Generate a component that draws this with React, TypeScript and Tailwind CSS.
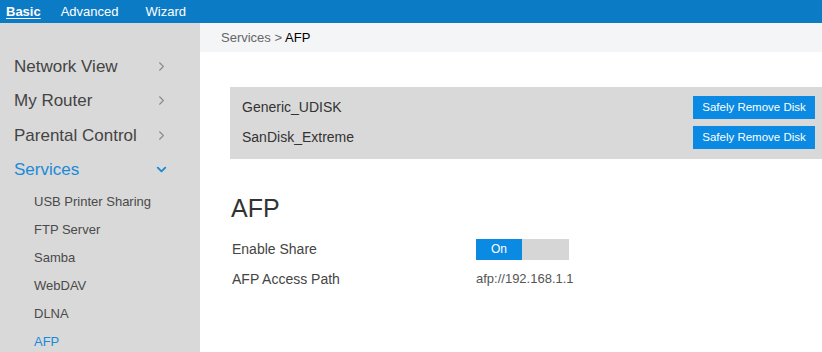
import { ChevronRight, ChevronDown } from 'lucide-react';

const MAIN_NAV = ['Network View', 'My Router', 'Parental Control'];

const SUB_NAV = ['USB Printer Sharing', 'FTP Server', 'Samba', 'WebDAV', 'DLNA', 'AFP'];

const DISKS = ['Generic_UDISK', 'SanDisk_Extreme'];

export default function App() {
  return (
    <div
      className="w-[822px] h-[352px] flex flex-col overflow-hidden bg-white text-[#333]"
      style={{ fontFamily: '"Liberation Sans", Arial, sans-serif' }}
    >
      {/* top tabs */}
      <div className="h-[23px] bg-[#0c7bc6] flex items-center text-white text-[13px] shrink-0">
        <span className="ml-[6px] font-bold underline underline-offset-2">Basic</span>
        <span className="ml-[20px]">Advanced</span>
        <span className="ml-[27px]">Wizard</span>
      </div>

      <div className="flex flex-1 min-h-0">
        {/* sidebar */}
        <div className="w-[200px] shrink-0 bg-[#d9d9d9] pt-[26px]">
          {MAIN_NAV.map((item) => (
            <div key={item} className="h-[34.5px] flex items-center pl-[14px] pr-[31px] justify-between">
              <span className="text-[17px] text-[#444]">{item}</span>
              <ChevronRight size={15} strokeWidth={1.75} className="text-[#8a8a8a]" />
            </div>
          ))}
          <div className="h-[34.5px] flex items-center pl-[14px] pr-[31px] justify-between">
            <span className="text-[17px] text-[#1a8ad8]">Services</span>
            <ChevronDown size={15} strokeWidth={3} className="text-[#1a8ad8]" />
          </div>
          {SUB_NAV.map((item) => (
            <div
              key={item}
              className={`h-[28px] pt-[2px] flex items-center pl-[34px] text-[13px] ${
                item === 'AFP' ? 'text-[#1a8ad8]' : 'text-[#4a4a4a]'
              }`}
            >
              {item}
            </div>
          ))}
        </div>

        {/* content */}
        <div className="flex-1 min-w-0">
          <div className="h-[29px] bg-[#f4f5f7] flex items-center pl-[21px] text-[13px]">
            <span className="text-[#666]">Services &gt; </span>
            <span className="text-black ml-[3px]">AFP</span>
          </div>

          <div className="mt-[35px] ml-[30px] bg-[#d9d9d9] pt-[9px] pb-[10px] flex flex-col gap-[7px]">
            {DISKS.map((disk) => (
              <div key={disk} className="h-[23px] flex items-center justify-between pl-[12px] pr-[7px]">
                <span className="text-[14px] text-[#333]">{disk}</span>
                <button className="w-[122px] h-[23px] bg-[#0a8ae3] text-white text-[11.5px]">
                  Safely Remove Disk
                </button>
              </div>
            ))}
          </div>

          <div className="ml-[31px] mt-[35px]">
            <div className="text-[25px] leading-[28px] text-[#333]">AFP</div>
            <div className="mt-[12px] h-[30px] flex items-center text-[14px]">
              <span className="w-[245px] text-[#444] pl-[1px]">Enable Share</span>
              <div className="flex h-[21px]">
                <div className="w-[46px] bg-[#0a8ae3] text-white text-[12px] flex items-center justify-center">
                  On
                </div>
                <div className="w-[47px] bg-[#d6d6d6]" />
              </div>
            </div>
            <div className="h-[30px] flex items-center text-[14px]">
              <span className="w-[245px] text-[#444] pl-[1px]">AFP Access Path</span>
              <span className="text-[13px] text-[#555]">afp://192.168.1.1</span>
            </div>
          </div>
        </div>
      </div>
    </div>
  );
}
